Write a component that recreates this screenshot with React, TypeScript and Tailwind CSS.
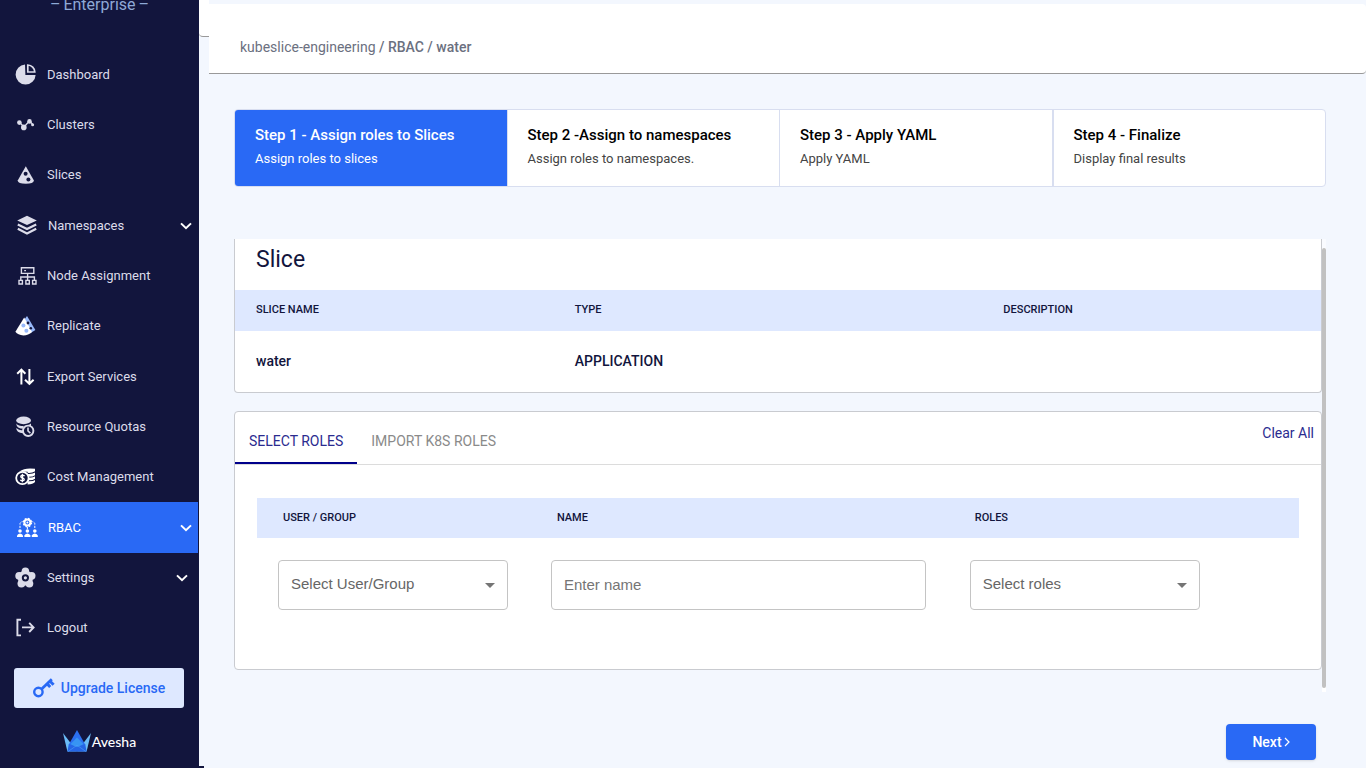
import type { ReactNode } from "react";
import { clsx } from "clsx";

interface NavItem {
  label: string;
  icon: ReactNode;
  active?: boolean;
  expandable?: boolean;
  shifted?: boolean;
}

const LIGHT = "#dcdcea";
const NAVY = "#12153d";

function DashboardIcon() {
  return (
    <svg viewBox="0 0 22 22" className="size-[22px]">
      <path d="M10 .6A10 10 0 1 0 20.6 11H10.4Z" fill={LIGHT} />
      <path d="M12.8 1V8H19.8A7.2 7.2 0 0 0 12.8 1Z" fill="none" stroke={LIGHT} strokeWidth="1.7" />
    </svg>
  );
}

function ClustersIcon() {
  return (
    <svg viewBox="0 0 22 22" className="size-[22px]" fill={LIGHT}>
      <path d="M4.6 8.4 9 13 14.6 6.8 17.8 10.6" fill="none" stroke={LIGHT} strokeWidth="1.3" />
      <circle cx="4.4" cy="8.6" r="2.3" />
      <circle cx="8.8" cy="13.4" r="2.8" />
      <circle cx="14.5" cy="7.4" r="2.3" />
      <circle cx="17.6" cy="10.8" r="1.5" />
    </svg>
  );
}

function SlicesIcon() {
  return (
    <svg viewBox="0 0 22 22" className="size-[22px]">
      <path d="M10.8 2.2 18.9 16.4Q18.6 19.6 10.8 19.8 3 19.6 2.7 16.4Z" fill={LIGHT} />
      <circle cx="10.6" cy="9.8" r="2" fill={NAVY} />
      <circle cx="13.4" cy="15.4" r="2" fill={NAVY} />
    </svg>
  );
}

function NamespacesIcon() {
  return (
    <svg viewBox="0 0 22 22" className="size-[22px]">
      <path d="M11 .8 20.8 5.4 11 10 1.2 5.4Z" fill={LIGHT} />
      <path d="M1.8 9.4 11 14 20.2 9.4M1.8 13.8 11 18.4 20.2 13.8" fill="none" stroke={LIGHT} strokeWidth="2.2" />
    </svg>
  );
}

function NodeIcon() {
  return (
    <svg viewBox="0 0 22 22" className="size-[22px]" fill="none" stroke={LIGHT} strokeWidth="1.4">
      <path d="M6.4 2.8H18.8V8.4H6.4ZM12.6 8.4V15.2M5.8 15.2V12H19.4V15.2M9.2 5.6H11" />
      <path d="M4 15.4H7.4V19H4ZM10.9 15.4H14.3V19H10.9ZM17.6 15.4H21V19H17.6Z" />
    </svg>
  );
}

function ReplicateIcon() {
  return (
    <svg viewBox="0 0 22 22" className="size-[22px]">
      <path d="M12 1 20.4 15 15.6 18 9.4 4.4Z" fill="#97b8fa" />
      <path d="M9.2 2.4 17 17Q13.4 20.4 8.4 20.4 2.8 20 .4 16.8Z" fill="#fff" />
      <circle cx="8.4" cy="10.4" r="2" fill="#97b8fa" />
      <circle cx="11.4" cy="15.8" r="2" fill="#97b8fa" />
      <circle cx="13" cy="8" r="1.4" fill={NAVY} />
      <circle cx="15.8" cy="13.2" r="1.3" fill={NAVY} />
    </svg>
  );
}

function ExportIcon() {
  return (
    <svg viewBox="0 0 22 22" className="size-[22px]" fill="none" stroke="#fff" strokeWidth="2">
      <path d="M6.4 18.6V3.8M2.2 7.8 6.4 3.6 10.4 7.8M14.4 3V17.6M10 13.8 14.4 17.8 18.6 13.8" />
    </svg>
  );
}

function QuotasIcon() {
  return (
    <svg viewBox="0 0 22 22" className="size-[22px]">
      <ellipse cx="8.6" cy="4.4" rx="7.4" ry="3.8" fill={LIGHT} />
      <path d="M1.2 7.4Q3.4 10 8.6 10V12.8Q1.6 12.8 1.2 7.4ZM1.2 12Q3.4 14.4 8 14.4V17.2Q1.4 16.8 1.2 12Z" fill={LIGHT} />
      <path d="M8.4 10Q13 10 16 7.4V10H8.6Z" fill={LIGHT} />
      <circle cx="13.2" cy="14.8" r="5.2" fill={NAVY} stroke={LIGHT} strokeWidth="1.9" />
      <path d="M13 11.6V15L15.4 17.2" fill="none" stroke={LIGHT} strokeWidth="1.6" />
    </svg>
  );
}

function CostIcon() {
  return (
    <svg viewBox="0 0 22 22" className="size-[22px]">
      <path d="M4.4 5.4Q10 1.4 20 2.8V16Q18 18.4 12.6 18.4V5.8Z" fill="#fff" />
      <path d="M12 7.4Q17 8 20.4 5.8M13 11.2Q18 11.4 20.4 9.6M13 14.8Q18 15 20.4 13.2" fill="none" stroke={NAVY} strokeWidth="1.1" />
      <circle cx="7.4" cy="12" r="6.2" fill={NAVY} stroke="#fff" strokeWidth="1.8" />
      <path d="M9.6 9.9Q7.4 8.6 6 9.8 5.2 11.4 7.4 12 9.8 12.6 9 14.2 7.4 15.4 5.2 14M7.4 7.8V16.2" fill="none" stroke="#fff" strokeWidth="1.3" />
    </svg>
  );
}

function RbacIcon() {
  return (
    <svg viewBox="0 0 22 22" className="size-[22px]" fill="#fff">
      <circle cx="11.4" cy="5.6" r="3" fill="none" stroke="#fff" strokeWidth="2" />
      <circle cx="11.4" cy="5.6" r="4.2" fill="none" stroke="#fff" strokeWidth="1.2" strokeDasharray="1.8 1.5" />
      <circle cx="11.4" cy="5.6" r="1" />
      <path d="M4 11V6.6Q4.4 5 6.4 4.6M18.8 11V6.6Q18.4 5 16.4 4.6M11.4 10V13" fill="none" stroke="#fff" strokeDasharray="2.2 1.2" />
      {[4, 11.4, 18.8].map((x) => (
        <g key={x}>
          <circle cx={x} cy="14" r="1.8" />
          <path d={`M${x - 3} 20V18.6Q${x - 2.4} 16.6 ${x} 16.4 ${x + 2.4} 16.6 ${x + 3} 18.6V20Z`} />
        </g>
      ))}
    </svg>
  );
}

function SettingsIcon() {
  return (
    <svg viewBox="0 0 22 22" className="size-[22px]" fill={LIGHT}>
      <circle cx="10.4" cy="11" r="7.6" />
      <circle cx="10.4" cy="4.4" r="3.8" />
      <circle cx="16.6" cy="8.8" r="3.9" />
      <circle cx="14.4" cy="16.6" r="3.9" />
      <circle cx="6.4" cy="16.6" r="3.9" />
      <circle cx="4.2" cy="8.8" r="3.9" />
      <circle cx="10.4" cy="10.8" r="2.6" stroke={NAVY} strokeWidth="2" />
    </svg>
  );
}

function LogoutIcon() {
  return (
    <svg viewBox="0 0 22 22" className="size-[22px]" fill="none" stroke={LIGHT} strokeWidth="1.9">
      <path d="M6 2.8H2.4V18.4H6M7 10.4H18.4M14.2 5.8 18.6 10.4 14.2 15" />
    </svg>
  );
}

function KeyIcon() {
  return (
    <svg viewBox="0 0 22 20" className="h-5 w-[22px]" fill="none" stroke="#2969f5">
      <circle cx="5.4" cy="14" r="4.2" strokeWidth="2.4" />
      <path d="M8.4 11.2 18.8 1.2" strokeWidth="2.8" />
      <path d="M14 5.6 17.2 9M16.8 3 20.6 6.8" strokeWidth="3" />
    </svg>
  );
}

function AveshaLogo() {
  return (
    <svg viewBox="0 0 28 22" className="h-[22px] w-7">
      <path d="M0 3 14 21.6H4.4Z" fill="#6bbcf8" />
      <path d="M28 3 14 21.6H23.6Z" fill="#6bbcf8" />
      <path d="M14 0 22.2 14.6 14 21.6 5.8 14.6Z" fill="#2b6ff0" />
      <path d="M7.6 14 14 7.4 20.4 14 14 18.4Z" fill="#3794f3" />
      <path d="M4.4 21.6 5.8 14 14 17 22.2 14 23.6 21.6Z" fill="#2565e6" />
      <path d="M5 21.6 14 15.2 23 21.6" fill="none" stroke="#4ea1f7" strokeWidth=".6" />
    </svg>
  );
}

function Chevron() {
  return (
    <svg viewBox="0 0 12 8" className="h-2 w-3" fill="none" stroke="#fff" strokeWidth="2">
      <path d="M1 1.4 6 6.2 11 1.4" />
    </svg>
  );
}

const NAV_ITEMS: NavItem[] = [
  { label: "Dashboard", icon: <DashboardIcon /> },
  { label: "Clusters", icon: <ClustersIcon /> },
  { label: "Slices", icon: <SlicesIcon /> },
  { label: "Namespaces", icon: <NamespacesIcon />, expandable: true, shifted: true },
  { label: "Node Assignment", icon: <NodeIcon /> },
  { label: "Replicate", icon: <ReplicateIcon /> },
  { label: "Export Services", icon: <ExportIcon /> },
  { label: "Resource Quotas", icon: <QuotasIcon /> },
  { label: "Cost Management", icon: <CostIcon /> },
  { label: "RBAC", icon: <RbacIcon />, active: true, expandable: true, shifted: true },
  { label: "Settings", icon: <SettingsIcon />, expandable: true },
  { label: "Logout", icon: <LogoutIcon /> },
];

const STEPS = [
  { title: "Step 1 - Assign roles to Slices", text: "Assign roles to slices" },
  { title: "Step 2 -Assign to namespaces", text: "Assign roles to namespaces." },
  { title: "Step 3 - Apply YAML", text: "Apply YAML" },
  { title: "Step 4 - Finalize", text: "Display final results" },
];

function Sidebar() {
  return (
    <aside className="flex w-[199px] shrink-0 flex-col bg-[#12153d]">
      <div className="flex h-[49px] items-start justify-center gap-[3px] text-[16px] leading-[10px] text-[#8fa9d6]">
        <span>–</span>
        <span>Enterprise</span>
        <span>–</span>
      </div>
      <nav className="flex flex-col">
        {NAV_ITEMS.map((item) => (
          <a
            key={item.label}
            href="#"
            className={clsx(
              "mr-px flex h-[50px] items-center gap-[10px] text-[13px] [&:nth-child(3n+1)]:h-[51px]",
              item.shifted ? "pr-[6px] pl-4" : "pr-[10px] pl-[15px]",
              item.active ? "bg-[#2969f5] text-white" : "text-[#dcdcea]",
            )}
          >
            {item.icon}
            <span className="flex-1">{item.label}</span>
            {item.expandable && <Chevron />}
          </a>
        ))}
      </nav>
      <button className="mt-[15px] mr-[15px] ml-[14px] flex h-10 items-center justify-center gap-[6px] rounded-[3px] bg-[#dee8ff] text-[14px] font-medium text-[#2969f5]">
        <KeyIcon />
        Upgrade License
      </button>
      <div className="mt-[22px] flex items-center justify-center gap-px font-[Lato,sans-serif] text-[14px] font-medium text-white">
        <AveshaLogo />
        Avesha
      </div>
    </aside>
  );
}

function Steps() {
  return (
    <ol className="grid grid-cols-4 overflow-hidden rounded-[4px] border border-[#d8def0] bg-white">
      {STEPS.map((step, i) => (
        <li
          key={step.title}
          className={clsx(
            "h-[76px] border-[#d8def0] pt-[15px] pl-5",
            i === STEPS.length - 1 ? "border-l" : "border-r",
            i === 0 ? "bg-[#2969f5] text-white" : "text-black",
          )}
        >
          <p className="text-[15px] leading-5 font-medium">{step.title}</p>
          <p className={clsx("mt-1 text-[13px] leading-5", i > 0 && "text-[#444]")}>{step.text}</p>
        </li>
      ))}
    </ol>
  );
}

function SliceCard() {
  return (
    <section className="overflow-hidden rounded-b-[4px] border border-t-0 border-[#c9cbd0] bg-white text-[#12153d]">
      <h1 className="h-[51px] pt-1 pl-[21px] text-[23px] leading-[34px]">Slice</h1>
      <table className="w-full table-fixed text-left">
        <thead className="bg-[#dee8ff] text-[11px]">
          <tr className="h-[41px]">
            <th className="w-[30%] pl-[21px] font-medium">SLICE NAME</th>
            <th className="w-[39%] pl-[14px] font-medium">TYPE</th>
            <th className="pl-[19px] font-medium">DESCRIPTION</th>
          </tr>
        </thead>
        <tbody>
          <tr className="h-[61px] text-[14px] font-medium">
            <td className="pl-[21px]">water</td>
            <td className="pl-[14px]">APPLICATION</td>
            <td />
          </tr>
        </tbody>
      </table>
    </section>
  );
}

function SelectBox({ label }: { label: string }) {
  return (
    <div className="relative w-[230px]">
      <select
        aria-label={label}
        className="h-[50px] w-full appearance-none rounded-[4px] border border-[#c4c4c4] bg-white px-3 pb-[2px] font-[Liberation_Sans,sans-serif] text-[15px] text-[#666]"
      >
        <option>{label}</option>
      </select>
      <svg viewBox="0 0 10 5" className="pointer-events-none absolute top-[23px] right-[13px] h-[5px] w-[10px]" fill="#757575">
        <path d="M0 0H10L5 5Z" />
      </svg>
    </div>
  );
}

function RolesCard() {
  return (
    <section className="rounded-[4px] border border-[#c9cbd0] bg-white pb-[59px]">
      <div className="flex h-[53px] items-end border-b border-[#dcdcdc] text-[14px]">
        <button className="h-11 border-b-2 border-[#00008b] px-[14px] pt-px text-[#2b2b8f]">SELECT ROLES</button>
        <button className="h-11 border-b-2 border-transparent px-[14px] pt-px text-[#8a8a8a]">IMPORT K8S ROLES</button>
        <button className="mr-[7px] mb-5 ml-auto text-[#2b2b8f]">Clear All</button>
      </div>
      <table className="mx-[22px] mt-[33px] w-[calc(100%-44px)] table-fixed text-left">
        <thead className="bg-[#dee8ff] text-[11px] text-[#12153d]">
          <tr className="h-10">
            <th className="w-[26%] pl-[26px] font-medium">USER / GROUP</th>
            <th className="w-[40%] pl-[29px] font-medium">NAME</th>
            <th className="pl-[30px] font-medium">ROLES</th>
          </tr>
        </thead>
        <tbody>
          <tr className="align-top">
            <td className="pt-[22px] pl-[21px]">
              <SelectBox label="Select User/Group" />
            </td>
            <td className="pt-[22px] pr-[19px] pl-[23px]">
              <input
                aria-label="Name"
                placeholder="Enter name"
                className="h-[50px] w-full rounded-[4px] border border-[#c4c4c4] px-3 pb-[2px] font-[Liberation_Sans,sans-serif] text-[15px] placeholder:text-[#757575]"
              />
            </td>
            <td className="pt-[22px] pl-[25px]">
              <SelectBox label="Select roles" />
            </td>
          </tr>
        </tbody>
      </table>
    </section>
  );
}

export default function App() {
  return (
    <div className="flex h-screen overflow-hidden bg-[#f3f7fe] font-[Roboto,sans-serif]">
      <Sidebar />
      <div className="flex w-[10px] shrink-0 flex-col justify-between">
        <div className="h-[37px] rounded-bl-[4px] border-b border-[#999] bg-white" />
        <div className="h-[2px] w-[5px] bg-[#12153d]" />
      </div>
      <main className="flex min-w-0 flex-1 flex-col">
        <header className="mt-1 h-[70px] shrink-0 rounded-r-[4px] border-b border-[#999] bg-white pt-[33px] pl-[31px] text-[14px] leading-5 text-[#6b7080]">
          <a href="#">kubeslice-engineering</a>
          <span className="font-medium"> / RBAC / water</span>
        </header>
        <div className="mt-[35px] mr-10 ml-[25px]">
          <Steps />
          <div className="mt-[52px] flex">
            <div className="flex min-w-0 flex-1 flex-col gap-[18px]">
              <SliceCard />
              <RolesCard />
            </div>
            <div className="-mb-[22px] w-1 bg-white pb-1">
              <div className="h-[9px] bg-[#f9fbff]" />
              <div className="h-[calc(100%-9px)] rounded-full bg-[#c1c1c1]" />
            </div>
          </div>
        </div>
        <button className="mt-[54px] mr-[50px] flex h-9 w-[90px] shrink-0 items-center justify-center gap-[2px] self-end rounded-[4px] bg-[#2969f5] text-[14px] font-medium text-white shadow">
          Next
          <svg viewBox="0 0 6 10" className="h-[10px] w-[6px]" fill="none" stroke="#fff" strokeWidth="1.2">
            <path d="M1 1 5 5 1 9" />
          </svg>
        </button>
      </main>
    </div>
  );
}
